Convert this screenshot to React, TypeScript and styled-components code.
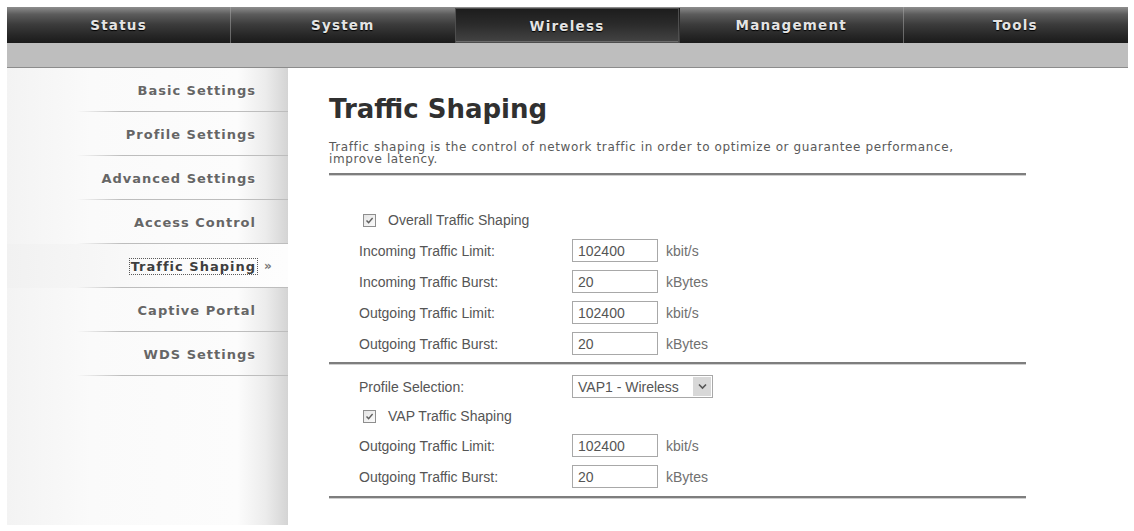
import React from "react";
import styled, { createGlobalStyle } from "styled-components";

const GlobalStyle = createGlobalStyle`
  html, body {
    margin: 0;
    padding: 0;
    background: #ffffff;
  }
  body {
    font-family: "Liberation Sans", Arial, sans-serif;
  }
`;

const Page = styled.div`
  width: 1121px;
  padding: 7px 0 0 7px;
`;

const NavBar = styled.nav`
  display: grid;
  grid-template-columns: repeat(5, 1fr);
  height: 36px;
  background: linear-gradient(
    to bottom,
    #8e8e8e 0%,
    #5c5c5c 20%,
    #3c3c3c 48%,
    #272727 78%,
    #1b1b1b 100%
  );
`;

type TabProps = { $active?: boolean; $divider?: boolean };

const Tab = styled.div<TabProps>`
  display: flex;
  align-items: center;
  justify-content: center;
  font-family: "DejaVu Sans", Verdana, sans-serif;
  font-weight: bold;
  font-size: 13.5px;
  letter-spacing: 1.2px;
  color: #e4e4e4;
  text-shadow: 0 1px 1px #000;
  border-right: 1px solid
    ${(p) => (p.$divider ? "rgba(170, 170, 170, 0.5)" : "transparent")};

  ${(p) =>
    p.$active &&
    `
    background: linear-gradient(to bottom, #1c1c1c 0%, #2a2a2a 45%, #454545 100%);
    box-shadow: inset 0 0 0 1px #4e4e4e, inset 0 -2px 0 #6c6c6c;
    margin-top: 1px;
  `}
`;

const SubBar = styled.div`
  height: 24px;
  background: #bebebe;
  border-bottom: 1px solid #8c8c8c;
`;

const Main = styled.div`
  display: flex;
  align-items: flex-start;
`;

const Sidebar = styled.aside`
  width: 281px;
  height: 457px;
  display: flex;
  flex-direction: column;
  background: linear-gradient(
    to right,
    #f3f3f3 0%,
    #fafafa 30%,
    #fcfcfc 82%,
    #ececec 92%,
    #d4d4d4 100%
  );
`;

const SideItem = styled.div<{ $active?: boolean }>`
  box-sizing: border-box;
  height: 44px;
  display: flex;
  align-items: center;
  justify-content: flex-end;
  padding-right: 9px;
  font-family: "DejaVu Sans", Verdana, sans-serif;
  font-weight: bold;
  font-size: 13px;
  letter-spacing: 1px;
  color: ${(p) => (p.$active ? "#3e3e3e" : "#666666")};
  text-shadow: 0 1px 0 #ffffff;
  background:
    linear-gradient(to right, rgba(190, 190, 190, 0) 70px, #bdbdbd 115px) bottom / 100% 1px no-repeat
    ${(p) =>
      p.$active
        ? ", linear-gradient(to right, #f1f1f1 0%, #fbfbfb 60%, #fdfdfd 100%)"
        : ""};
`;

const SideLabel = styled.span<{ $active?: boolean }>`
  padding: 0 1px;
  outline: ${(p) => (p.$active ? "1px dotted #5a5a5a" : "none")};
`;

const Marker = styled.span`
  width: 22px;
  text-align: center;
  font-size: 12px;
  letter-spacing: 0;
  color: #777777;
`;

const Content = styled.section`
  width: 697px;
  margin-left: 41px;
  padding-top: 26px;
`;

const Title = styled.h1`
  margin: 0;
  font-family: "DejaVu Sans", Verdana, sans-serif;
  font-weight: bold;
  font-size: 26px;
  line-height: 30px;
  color: #303030;
`;

const Description = styled.p`
  margin: 17px 0 0;
  font-family: "DejaVu Sans", Verdana, sans-serif;
  font-size: 12px;
  letter-spacing: 0.62px;
  line-height: 12px;
  color: #5a5a5a;
  white-space: nowrap;
`;

const Rule = styled.hr<{ $top?: number }>`
  margin: ${(p) => p.$top ?? 0}px 0 0;
  height: 2px;
  border: none;
  background: #7e7e7e;
  box-shadow: 0 1px 0 #cfcfcf;
`;

const Section = styled.div<{ $padTop: number; $padBottom: number }>`
  padding: ${(p) => p.$padTop}px 0 ${(p) => p.$padBottom}px;
  font-size: 14px;
  color: #555555;
`;

const FormRow = styled.div<{ $height?: number }>`
  display: grid;
  grid-template-columns: 213px 94px auto;
  align-items: center;
  height: ${(p) => p.$height ?? 31}px;
  padding-left: 30px;
`;

const CheckRow = styled.label<{ $height: number }>`
  display: flex;
  align-items: center;
  gap: 12px;
  height: ${(p) => p.$height}px;
  padding-left: 34px;
`;

const CheckBox = styled.span`
  box-sizing: border-box;
  width: 13px;
  height: 13px;
  border: 1px solid #8e8e8e;
  background: linear-gradient(135deg, #e4e4e4, #fbfbfb);
  display: flex;
  align-items: center;
  justify-content: center;
`;

const TextBox = styled.input`
  box-sizing: border-box;
  width: 86px;
  height: 23px;
  border: 1px solid #a8a8a8;
  padding: 0 5px;
  font-family: "Liberation Sans", Arial, sans-serif;
  font-size: 14px;
  color: #555555;
  background: #ffffff;
  outline: none;
`;

const Unit = styled.span`
  color: #707070;
`;

const SelectBox = styled.div`
  box-sizing: border-box;
  width: 141px;
  height: 23px;
  border: 1px solid #a8a8a8;
  display: flex;
  align-items: center;
  justify-content: space-between;
  padding: 1px 1px 1px 5px;
  background: #ffffff;
`;

const SelectArrow = styled.span`
  width: 18px;
  height: 19px;
  background: #d8d8d8;
  display: flex;
  align-items: center;
  justify-content: center;
`;

const CheckMark = () => (
  <svg width="9" height="9" viewBox="0 0 9 9">
    <path d="M1.5 4.5 L3.6 6.6 L7.6 2" fill="none" stroke="#5f5f5f" strokeWidth="1.4" />
  </svg>
);

const Chevron = () => (
  <svg width="9" height="7" viewBox="0 0 9 7">
    <path d="M1 1.5 L4.5 5 L8 1.5" fill="none" stroke="#555" strokeWidth="1.6" />
  </svg>
);

const tabs = ["Status", "System", "Wireless", "Management", "Tools"];

const menu = [
  "Basic Settings",
  "Profile Settings",
  "Advanced Settings",
  "Access Control",
  "Traffic Shaping",
  "Captive Portal",
  "WDS Settings",
];

type Field = { label: string; value: string; unit: string };

const overall: Field[] = [
  { label: "Incoming Traffic Limit:", value: "102400", unit: "kbit/s" },
  { label: "Incoming Traffic Burst:", value: "20", unit: "kBytes" },
  { label: "Outgoing Traffic Limit:", value: "102400", unit: "kbit/s" },
  { label: "Outgoing Traffic Burst:", value: "20", unit: "kBytes" },
];

const vap: Field[] = [
  { label: "Outgoing Traffic Limit:", value: "102400", unit: "kbit/s" },
  { label: "Outgoing Traffic Burst:", value: "20", unit: "kBytes" },
];

const FieldRow = ({ label, value, unit }: Field) => (
  <FormRow>
    <span>{label}</span>
    <TextBox value={value} readOnly />
    <Unit>{unit}</Unit>
  </FormRow>
);

export default function App() {
  return (
    <Page>
      <GlobalStyle />
      <NavBar>
        {tabs.map((t) => (
          <Tab
            key={t}
            $active={t === "Wireless"}
            $divider={t === "Status" || t === "Management"}
          >
            {t}
          </Tab>
        ))}
      </NavBar>
      <SubBar />

      <Main>
        <Sidebar>
          {menu.map((m) => {
            const active = m === "Traffic Shaping";
            return (
              <SideItem key={m} $active={active}>
                <SideLabel $active={active}>{m}</SideLabel>
                <Marker>{active ? "»" : ""}</Marker>
              </SideItem>
            );
          })}
        </Sidebar>

        <Content>
          <Title>Traffic Shaping</Title>
          <Description>
            Traffic shaping is the control of network traffic in order to optimize or guarantee performance,
            <br />
            improve latency.
          </Description>
          <Rule $top={8} />

          <Section $padTop={30} $padBottom={3}>
            <CheckRow $height={30}>
              <CheckBox>
                <CheckMark />
              </CheckBox>
              Overall Traffic Shaping
            </CheckRow>
            {overall.map((f) => (
              <FieldRow key={f.label} {...f} />
            ))}
          </Section>
          <Rule />

          <Section $padTop={7} $padBottom={4}>
            <FormRow>
              <span>Profile Selection:</span>
              <SelectBox>
                <span>VAP1 - Wireless</span>
                <SelectArrow>
                  <Chevron />
                </SelectArrow>
              </SelectBox>
            </FormRow>
            <CheckRow $height={28}>
              <CheckBox>
                <CheckMark />
              </CheckBox>
              VAP Traffic Shaping
            </CheckRow>
            {vap.map((f) => (
              <FieldRow key={f.label} {...f} />
            ))}
          </Section>
          <Rule />
        </Content>
      </Main>
    </Page>
  );
}
